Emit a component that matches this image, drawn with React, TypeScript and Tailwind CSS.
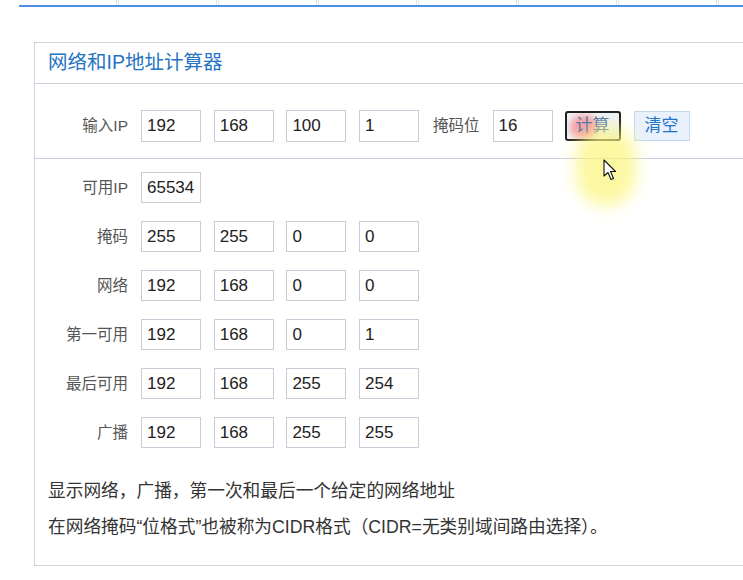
import React from 'react';

const font = { fontFamily: '"Liberation Sans", Arial, "Noto Sans CJK SC", sans-serif' };

const Box: React.FC<{ value: string }> = ({ value }) => (
    <div className="w-[60px] h-[31px] border border-[#c9cbd9] bg-white flex items-center pl-[5px] text-[17px] text-[#222]">
        {value}
    </div>
);

const Row: React.FC<{ label: string; values: string[] }> = ({ label, values }) => (
    <div className="flex items-center">
        <div className="w-[93px] text-right text-[15.5px] text-[#555] mr-[13px]">{label}</div>
        <div className="flex gap-[12.7px]">
            {values.map((v, i) => (
                <Box key={i} value={v} />
            ))}
        </div>
    </div>
);

export default function App() {
    const tabs = [0, 1, 2, 3, 4, 5, 6];
    return (
        <div className="relative w-[743px] h-[580px] overflow-hidden bg-white" style={font}>
            {/* cut-off tab strip */}
            <div className="ml-[19px] h-[7px] flex border-b-2 border-[#4a8fe0]">
                {tabs.map((t) => (
                    <div key={t} className="w-[100px] h-full border-r-[3px] border-double border-[#dfe3ea]" />
                ))}
            </div>

            <div className="ml-[34px] mt-[35px] w-[740px] border border-r-0 border-[#d2d3da]">
                {/* header */}
                <div className="h-[41px] flex items-center pl-[13px] border-b border-[#cfd1df]">
                    <span className="text-[19.5px] text-[#2573c5]">网络和IP地址计算器</span>
                </div>

                {/* input row */}
                <div className="h-[75px] pt-[9px] flex items-center border-b border-[#c9cde0]">
                    <div className="w-[93px] text-right text-[15.5px] text-[#555] mr-[13px]">输入IP</div>
                    <div className="flex gap-[12.7px]">
                        {['192', '168', '100', '1'].map((v, i) => (
                            <div key={i} className="w-[60px] h-[32px] border border-[#c9cbd9] flex items-center pl-[5px] text-[17px] text-[#222]">
                                {v}
                            </div>
                        ))}
                    </div>
                    <div className="ml-[14px] mr-[13px] text-[15.5px] text-[#555]">掩码位</div>
                    <div className="w-[60px] h-[32px] border border-[#c9cbd9] flex items-center pl-[5px] text-[17px] text-[#222]">16</div>
                    <button className="relative ml-[12px] w-[56px] h-[30px] border-2 border-[#1f1f1f] rounded-[3px] bg-[#eef2f8] text-[17px] text-[#4a6fae] overflow-hidden">
                        <span className="absolute left-[3px] top-[2px] w-[28px] h-[24px] rounded-full bg-[#f4a0a8] blur-[3px]" />
                        <span className="relative">计算</span>
                    </button>
                    <button className="ml-[13px] w-[56px] h-[30px] border border-[#c6d7ec] bg-[#e8f1fc] text-[17px] text-[#1f74c8]">
                        清空
                    </button>
                </div>

                {/* results */}
                <div className="pt-[13px] flex flex-col gap-[18px]">
                    <div className="flex items-center">
                        <div className="w-[93px] text-right text-[15.5px] text-[#555] mr-[13px]">可用IP</div>
                        <Box value="65534" />
                    </div>
                    <Row label="掩码" values={['255', '255', '0', '0']} />
                    <Row label="网络" values={['192', '168', '0', '0']} />
                    <Row label="第一可用" values={['192', '168', '0', '1']} />
                    <Row label="最后可用" values={['192', '168', '255', '254']} />
                    <Row label="广播" values={['192', '168', '255', '255']} />
                </div>

                <div className="pl-[13px] pt-[25px] pb-[20px] text-[17.7px] text-[#333] leading-[36px]">
                    <p>显示网络，广播，第一次和最后一个给定的网络地址</p>
                    <p>在网络掩码“位格式”也被称为CIDR格式（CIDR=无类别域间路由选择）。</p>
                </div>
            </div>

            {/* cursor highlight */}
            <div className="absolute left-[576px] top-[126px] w-[60px] h-[80px] rounded-full bg-[#fbf57a] opacity-70 blur-[8px] pointer-events-none" />
            <svg className="absolute left-[603px] top-[159px] pointer-events-none" width="14" height="22" viewBox="0 0 14 22">
                <path d="M1 1 L1 17 L5 13.5 L8 20.5 L10.5 19.5 L7.5 12.5 L12.5 12.5 Z" fill="#fff" stroke="#111" strokeWidth="1.1" strokeLinejoin="round" />
            </svg>
        </div>
    );
}
